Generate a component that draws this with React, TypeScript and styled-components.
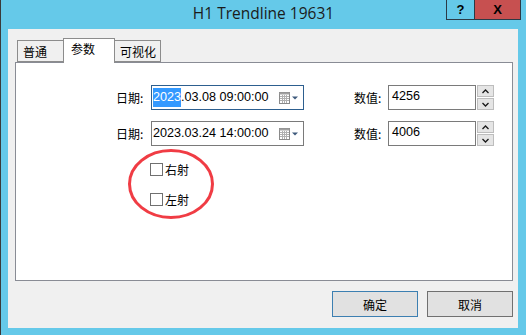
import styled, { createGlobalStyle } from "styled-components";

const GlobalStyle = createGlobalStyle`
  html, body {
    margin: 0;
    padding: 0;
    width: 526px;
    height: 335px;
    overflow: hidden;
    background: #65c9e9;
  }
  * { box-sizing: border-box; }
`

const cjk = `"Noto Sans CJK SC", "Liberation Sans", sans-serif`

const Window = styled.div`
  width: 526px;
  height: 335px;
  display: flex;
  flex-direction: column;
  background: #65c9e9;
  border-left: 1px solid #3a3a3a;
`

const TitleBar = styled.div`
  height: 29px;
  display: flex;
  align-items: flex-start;
  position: relative;
`

const Title = styled.div`
  flex: 1;
  text-align: center;
  font-family: "Open Sans", "Liberation Sans", sans-serif;
  font-size: 15.5px;
  line-height: 27px;
  color: #1b1b1b;
`

const CaptionButtons = styled.div`
  position: absolute;
  top: 0;
  right: 5px;
  display: flex;
`

const CaptionButton = styled.div<{ $close?: boolean }>`
  width: ${p => (p.$close ? "47px" : "29px")};
  height: 20px;
  border: 1px solid #2b3a46;
  border-top: none;
  margin-left: ${p => (p.$close ? "-1px" : "0")};
  background: ${p => (p.$close ? "#c75050" : "#65c9e9")};
  display: flex;
  align-items: center;
  justify-content: center;
  font-family: "Liberation Sans", sans-serif;
  font-weight: bold;
  font-size: 13px;
  color: #000;
`

const Client = styled.div`
  flex: 1;
  margin: 0 8px 7px 7px;
  background: #f0f0f0;
  display: flex;
  flex-direction: column;
  padding: 9px 5px 0 7px;
`

const TabStrip = styled.div`
  display: flex;
  align-items: flex-end;
  padding-left: 2px;
  height: 24px;
  position: relative;
  z-index: 1;
`

const Tab = styled.div<{ $active?: boolean; $side: "left" | "right" | "mid" }>`
  font-family: ${cjk};
  font-size: 12px;
  color: #000;
  background: ${p => (p.$active ? "#fff" : "#f0f0f0")};
  border: 1px solid #8c8c8c;
  border-bottom: ${p => (p.$active ? "none" : "1px solid #8c8c8c")};
  border-right: ${p => (p.$side === "left" ? "none" : "1px solid #8c8c8c")};
  border-left: ${p => (p.$side === "right" ? "none" : "1px solid #8c8c8c")};
  height: ${p => (p.$active ? "25px" : "22px")};
  margin-bottom: ${p => (p.$active ? "-1px" : "0")};
  width: ${p => (p.$active ? "52px" : "46px")};
  padding: ${p => (p.$active ? "2px 0 0 7px" : "3px 0 0 5px")};
  line-height: 16px;
`

const Panel = styled.div`
  height: 219px;
  width: 498px;
  background: #fff;
  border: 1px solid #898c95;
  position: relative;
  padding: 22px 0 0 100px;
  display: flex;
  flex-direction: column;
`

const FieldRow = styled.div`
  display: flex;
  align-items: center;
  height: 25px;
  margin-bottom: 11px;
`

const Label = styled.span<{ $w: number }>`
  width: ${p => p.$w}px;
  font-family: ${cjk};
  font-size: 12px;
  color: #000;
`

const DateBox = styled.div<{ $focus?: boolean }>`
  width: 153px;
  height: 25px;
  border: 1px solid ${p => (p.$focus ? "#2d5f8f" : "#7a7a7a")};
  display: flex;
  align-items: center;
  padding: 0 4px 0 1px;
  font-family: "Liberation Sans", sans-serif;
  font-size: 12.6px;
  color: #000;
`

const DateText = styled.span`
  flex: 1;
  white-space: nowrap;
  line-height: 19px;
`

const Selected = styled.span`
  background: #3399ff;
  color: #fff;
  display: inline-block;
  line-height: 19px;
`

const Spacer = styled.div<{ $w?: number; $h?: number }>`
  width: ${p => p.$w ?? 0}px;
  height: ${p => p.$h ?? 0}px;
  flex-shrink: 0;
`

const NumBox = styled.div`
  width: 88px;
  height: 25px;
  border: 1px solid #7a7a7a;
  font-family: "Liberation Sans", sans-serif;
  font-size: 12.6px;
  color: #000;
  padding: 0 0 0 3px;
  line-height: 21px;
`

const Spin = styled.div`
  margin-left: 1px;
  width: 17px;
  height: 25px;
  display: flex;
  flex-direction: column;
  gap: 1px;
`

const SpinButton = styled.div`
  flex: 1;
  background: #e5e5e5;
  border: 1px solid #bdbdbd;
  display: flex;
  align-items: center;
  justify-content: center;
`

const CheckRow = styled.label`
  display: flex;
  align-items: center;
  gap: 2px;
  margin-left: 34px;
  height: 14px;
  font-family: ${cjk};
  font-size: 12px;
  color: #000;
`

const CheckBox = styled.span`
  width: 13px;
  height: 13px;
  border: 1px solid #707070;
  background: #fff;
  display: inline-block;
`

const Annotation = styled.svg`
  position: absolute;
  left: 111px;
  top: 85px;
  pointer-events: none;
`

const ButtonBar = styled.div`
  display: flex;
  justify-content: flex-end;
  gap: 9px;
  padding: 10px 0 0 0;
  width: 498px;
`

const DialogButton = styled.div<{ $default?: boolean }>`
  width: 86px;
  height: 26px;
  background: #e1e1e1;
  border: 1px solid ${p => (p.$default ? "#3c7fb1" : "#707070")};
  display: flex;
  align-items: center;
  justify-content: center;
  font-family: ${cjk};
  font-size: 12px;
  color: #000;
`

const CalendarIcon = () => (
  <svg width="20" height="12" viewBox="0 0 20 12">
    <rect x="0.5" y="0.5" width="10" height="11" fill="#fff" stroke="#8a8a8a" />
    <rect x="0.5" y="0.5" width="10" height="2" fill="#a0a0a0" />
    {[3, 5, 7].map(x => (
      <line key={"v" + x} x1={x + 0.5} y1="3" x2={x + 0.5} y2="11" stroke="#b0b0b0" />
    ))}
    {[4.5, 6.5, 8.5].map(y => (
      <line key={"h" + y} x1="1" y1={y} x2="10" y2={y} stroke="#b0b0b0" />
    ))}
    <path d="M13 4.5 L19 4.5 L16 7.5 Z" fill="#3e5a7d" />
  </svg>
)

const Chevron = ({ up }: { up?: boolean }) => (
  <svg width="7" height="5" viewBox="0 0 7 5">
    <path
      d={up ? "M0.5 4 L3.5 1 L6.5 4" : "M0.5 1 L3.5 4 L6.5 1"}
      fill="none"
      stroke="#1a1a1a"
      strokeWidth="1.3"
    />
  </svg>
)

const App = () => {
  return (
    <>
      <GlobalStyle />
      <Window>
        <TitleBar>
          <Title>H1 Trendline 19631</Title>
          <CaptionButtons>
            <CaptionButton>?</CaptionButton>
            <CaptionButton $close>X</CaptionButton>
          </CaptionButtons>
        </TitleBar>
        <Client>
          <TabStrip>
            <Tab $side="left">普通</Tab>
            <Tab $active $side="mid">参数</Tab>
            <Tab $side="right">可视化</Tab>
          </TabStrip>
          <Panel>
            <FieldRow>
              <Label $w={35}>日期:</Label>
              <DateBox $focus>
                <DateText>
                  <Selected>2023</Selected>.03.08 09:00:00
                </DateText>
                <CalendarIcon />
              </DateBox>
              <Spacer $w={50} />
              <Label $w={34}>数值:</Label>
              <NumBox>4256</NumBox>
              <Spin>
                <SpinButton><Chevron up /></SpinButton>
                <SpinButton><Chevron /></SpinButton>
              </Spin>
            </FieldRow>
            <FieldRow>
              <Label $w={35}>日期:</Label>
              <DateBox>
                <DateText>2023.03.24 14:00:00</DateText>
                <CalendarIcon />
              </DateBox>
              <Spacer $w={50} />
              <Label $w={34}>数值:</Label>
              <NumBox>4006</NumBox>
              <Spin>
                <SpinButton><Chevron up /></SpinButton>
                <SpinButton><Chevron /></SpinButton>
              </Spin>
            </FieldRow>
            <Spacer $h={5} />
            <CheckRow>
              <CheckBox />
              右射
            </CheckRow>
            <Spacer $h={16} />
            <CheckRow>
              <CheckBox />
              左射
            </CheckRow>
            <Annotation width="88" height="72" viewBox="0 0 88 72">
              <ellipse cx="44" cy="36" rx="41.5" ry="33.5" fill="none" stroke="#f03c44" strokeWidth="3" />
            </Annotation>
          </Panel>
          <ButtonBar>
            <DialogButton $default>确定</DialogButton>
            <DialogButton>取消</DialogButton>
          </ButtonBar>
        </Client>
      </Window>
    </>
  )
}

export default App;
